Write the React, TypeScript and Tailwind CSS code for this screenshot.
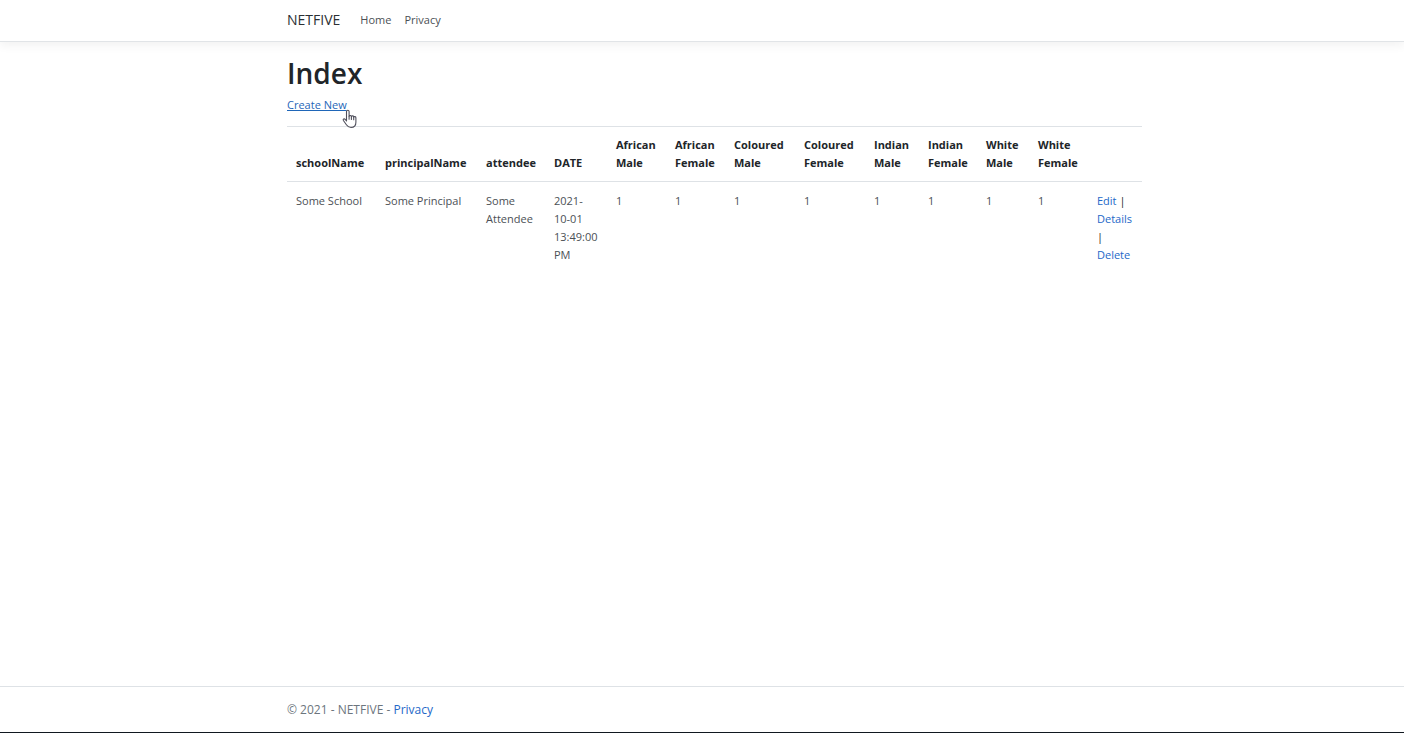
const columns = [
  { label: "schoolName", width: "w-[89px]" },
  { label: "principalName", width: "w-[101px]" },
  { label: "attendee", width: "w-[68px]" },
  { label: "DATE", width: "w-[62px]" },
  { label: "African Male", width: "w-[59px]" },
  { label: "African Female", width: "w-[59px]" },
  { label: "Coloured Male", width: "w-[70px]" },
  { label: "Coloured Female", width: "w-[70px]" },
  { label: "Indian Male", width: "w-[54px]" },
  { label: "Indian Female", width: "w-[58px]" },
  { label: "White Male", width: "w-[52px]" },
  { label: "White Female", width: "w-[59px]" },
  { label: "", width: "w-[54px]" },
];

const rows = [
  ["Some School", "Some Principal", "Some Attendee", "2021-10-01 13:49:00 PM", "1", "1", "1", "1", "1", "1", "1", "1"],
];

const container = "mx-auto w-full max-w-[855px]";

function HandPointer() {
  return (
    <svg
      className="pointer-events-none absolute top-[13px] left-[55px] h-[20px] w-[15px]"
      viewBox="0 0 15 20"
      fill="#fff"
      stroke="#50505c"
      strokeWidth="1.1"
      strokeLinejoin="round"
      strokeLinecap="round"
      aria-hidden="true"
    >
      <path d="M4.5 12V2.5a1.3 1.3 0 0 1 2.6 0V7.2a1.2 1.2 0 0 1 2.3.4 1.2 1.2 0 0 1 2.3.5 1.2 1.2 0 0 1 2.2.8v4.3c0 3-1.9 5.2-4.9 5.2-2.2 0-3.5-.9-4.6-2.6L1.4 11.5c-.8-1.3.8-2.3 1.8-1.1z" />
      <path d="M7.1 7.2v3M9.4 7.6v2.8M11.7 8.1v2.6" fill="none" />
    </svg>
  );
}

export default function App() {
  return (
    <div className="flex min-h-screen flex-col border-b border-[#111820] bg-white font-['Open_Sans','Noto_Sans',sans-serif] text-[11px] leading-[18px] text-[#212529]">
      <header className="border-b border-[#e1e4e7] pl-[25px] shadow-[0_4px_9px_rgba(0,0,0,0.05)]">
        <nav className={`${container} box-content flex h-10 items-center pb-px`}>
          <a href="#" className="mr-5 text-[14px] text-[#2b2f33]">NETFIVE</a>
          <div className="flex gap-[13px] text-[#4b5055]">
            <a href="#home">Home</a>
            <a href="#privacy">Privacy</a>
          </div>
        </nav>
      </header>

      <main className="grow pl-[25px]">
        <div className={`${container} pt-[14px]`}>
          <h1 className="text-[28px] leading-[34px] font-semibold">Index</h1>
          <p className="relative mt-[6px] mb-3 w-fit">
            <a href="#create" className="text-[#1f66b8] underline underline-offset-1">Create New</a>
            <HandPointer />
          </p>
          <table className="w-full table-fixed border-collapse text-left">
            <thead>
              <tr className="border-t border-b border-[#dee2e6]">
                {columns.map((column, i) => (
                  <th key={i} scope="col" className={`${column.width} py-[9px] pl-[9px] align-bottom font-bold`}>
                    {column.label}
                  </th>
                ))}
              </tr>
            </thead>
            <tbody>
              {rows.map((row, i) => (
                <tr key={i}>
                  {row.map((cell, j) => (
                    <td key={j} className="py-[10px] pr-[10px] pl-[9px] align-top text-[#4b5055]">{cell}</td>
                  ))}
                  <td className="py-[10px] pr-[10px] pl-[9px] align-top">
                    <a href="#edit" className="text-[#2468c8]">Edit</a> |{" "}
                    <a href="#details" className="text-[#2468c8]">Details</a> |{" "}
                    <a href="#delete" className="text-[#2468c8]">Delete</a>
                  </td>
                </tr>
              ))}
            </tbody>
          </table>
        </div>
      </main>

      <footer className="border-t border-[#dee2e6] pl-[25px] text-[12px] text-[#6c757d]">
        <div className={`${container} flex h-[45px] items-center`}>
          <p>
            © 2021 - NETFIVE - <a href="#privacy" className="text-[#2468c8]">Privacy</a>
          </p>
        </div>
      </footer>
    </div>
  );
}
